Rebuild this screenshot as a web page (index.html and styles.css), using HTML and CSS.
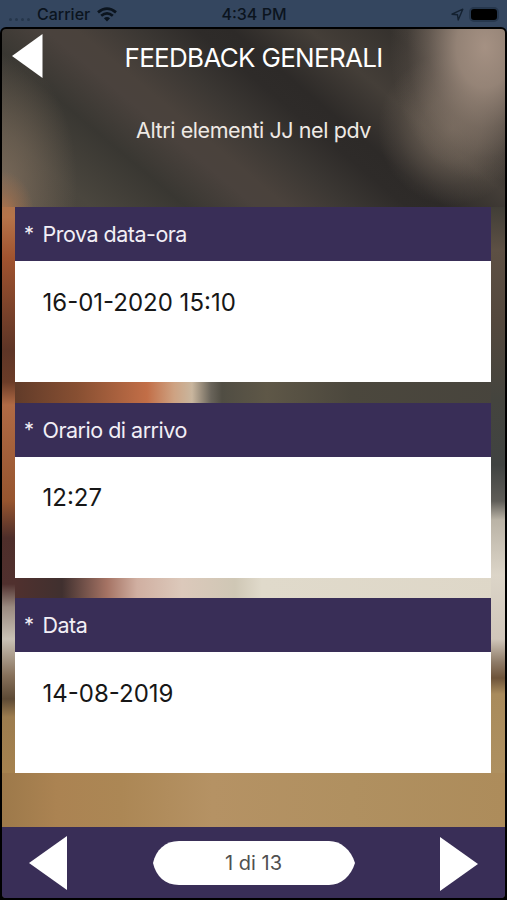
FILE: index.html
```html
<!DOCTYPE html>
<html lang="it">
<head>
<meta charset="utf-8">
<title>Feedback generali</title>
<link rel="stylesheet" href="styles.css">
</head>
<body>
<div class="phone">
  <div class="status">
    <div class="carrier">
      <span class="dots"><i></i><i></i><i></i><i></i></span>
      <span class="carrier-name">Carrier</span>
      <svg class="wifi" width="20" height="15" viewBox="0 0 20 15"><g fill="none" stroke="#0b141e" stroke-width="2.7"><path d="M1 5.4Q10-2.2 19 5.4"/><path d="M4.2 8.8Q10 3.8 15.8 8.8"/></g><path d="M10 14.5 6.9 11.3Q10 8.7 13.1 11.3Z" fill="#0b141e"/></svg>
    </div>
    <span class="clock">4:34 PM</span>
    <div class="power">
      <svg width="13" height="13" viewBox="0 0 13 13"><path d="M1 6.2 11.8 1.2 7.2 12 6.5 6.8Z" fill="none" stroke="#142130" stroke-width="1.4" stroke-linejoin="round"/></svg>
      <span class="battery"></span>
    </div>
  </div>
  <div class="screen">
    <header class="header">
      <svg class="back" width="31" height="44" viewBox="0 0 31 44"><path d="M0 22 30.5 0V44Z" fill="#fff"/></svg>
      <h1 class="title">FEEDBACK GENERALI</h1>
    </header>
    <p class="subtitle">Altri elementi JJ nel pdv</p>
    <main class="cards">
      <section class="card"><h2 class="label"><span class="star">*</span><span>Prova data-ora</span></h2><div class="value">16-01-2020 15:10</div></section>
      <section class="card"><h2 class="label"><span class="star">*</span><span>Orario di arrivo</span></h2><div class="value">12:27</div></section>
      <section class="card"><h2 class="label"><span class="star">*</span><span>Data</span></h2><div class="value">14-08-2019</div></section>
    </main>
    <footer class="footer">
      <svg width="38" height="54" viewBox="0 0 38 54"><path d="M0 27 38 0V54Z" fill="#fff"/></svg>
      <div class="pager"><svg width="202" height="44" viewBox="0 0 202 44"><path d="M26 0H176C188 0 198 9 202 22C198 35 188 44 176 44H26C12 44 3 35 0 22C3 9 12 0 26 0Z" fill="#fff"/></svg><span>1 di 13</span></div>
      <svg class="next" width="38" height="54" viewBox="0 0 38 54"><path d="M0 0 38 27 0 54Z" fill="#fff"/></svg>
    </footer>
  </div>
</div>
</body>
</html>
```
FILE: styles.css
```css
* { box-sizing: border-box; }
body { margin: 0; background: #000; font-family: Inter, "Liberation Sans", sans-serif; }
.phone { width: 507px; height: 900px; display: flex; flex-direction: column; overflow: hidden; background: linear-gradient(#34465f 0 40px, #000 40px); }
.status { height: 27px; padding: 0 8px 0 9px; display: grid; grid-template-columns: 1fr auto 1fr; align-items: center; background: #34465f; color: #0b141e; font-size: 16px; font-weight: 500; line-height: 28px; }
.carrier, .power { display: flex; align-items: center; }
.power { justify-content: flex-end; gap: 5px; }
.dots { display: flex; gap: 3px; width: 28px; padding-top: 10px; }
.dots i { width: 3px; height: 3px; border-radius: 50%; background: #26364b; }
.carrier-name { width: 60px; }
.battery { width: 30px; height: 15px; border: 2px solid #26374d; border-radius: 5px; background: #000; }
.screen {
  flex: 1; display: flex; flex-direction: column; border: 2px solid #000; border-radius: 6px; overflow: hidden;
  background:
    linear-gradient(#b0744c 0, #b5744a 10px, #a0532f 51px, #5e3526 143px, #6b3c28 175px, #b06a45 198px, #96552f 294px, #4e2e2a 331px, #50302e 377px, #9a8a80 400px, #c9c1b5 432px, #86705a 469px, #5d4a35 492px, #9c7c4e 510px, #a5824f 566px) 0 178px / 13px 566px no-repeat,
    linear-gradient(#413e37 0, #5d5044 43px, #54483d 113px, #44443e 193px, #404341 258px, #5f5d58 294px, #bab3a6 313px, #dcd5c8 368px, #d0c6ba 432px, #8f7c68 455px, #6e543a 471px, #a98b5c 487px, #ae9060 566px) 100% 178px / 14px 566px no-repeat,
    linear-gradient(90deg, #613b29 13px, #874f32 75px, #c26e47 145px, #cea282 172px, #c9b69e 190px, #69645a 209px, #504d43 220px, #5e5747 265px, #4b473d 350px, #47443d) 0 353px / 100% 22px no-repeat,
    linear-gradient(90deg, #50302e 13px, #40302f 60px, #a57364 105px, #d0afa1 135px, #dcc9bb 180px, #cfc7b5 233px, #e0dacb 260px, #ded7c8) 0 547px / 100% 23px no-repeat,
    linear-gradient(90deg, #9d794a, #ab8352 55px, #ac8755 120px, #b59264 210px, #b09060 350px, #ad8c5b) 0 743px / 100% 60px no-repeat,
    radial-gradient(ellipse 32px 42px at 0 184px, #b0744c, #b0744c66 50%, #b0744c00),
    radial-gradient(ellipse 95px 135px at 483px 18px, #a59183, #a08d7fe0 30%, #92817477 60%, #92817422 82%, #92817400),
    radial-gradient(ellipse 74px 76px at 450px 100px, #75685ccc, #75685c90 40%, #75685c30 75%, #75685c00),
    radial-gradient(ellipse 75px 130px at 0 155px, #82705ecc, #82705e66 50%, #82705e00),
    linear-gradient(40deg, #504a41 0, #4a463e 60px, #393732 120px, #4a423d 165px, #4a423c 185px, #3b3733 225px, #2e2b29 262px, #2d2a28 285px, #443e38 335px, #36322e 385px, #3c3833 470px) 0 0 / 100% 180px no-repeat,
    #4d483f;
}
.header { height: 60px; display: grid; grid-template-columns: 101px 1fr 111px; align-items: center; padding-left: 10px; }
.back { margin-top: -6px; }
.title { margin: -2px -10px 0; color: #fff; font-size: 26px; font-weight: 375; line-height: 32px; text-align: center; letter-spacing: -0.7px; white-space: nowrap; }
.subtitle { margin: 26px 0 0; height: 30px; color: #eee9e4; font-size: 21.5px; line-height: 30px; text-align: center; letter-spacing: -0.42px; }
.cards { margin: 62px 14px 0 13px; display: flex; flex-direction: column; gap: 20.5px; }
.card { height: 175px; background: #fff; }
.label { margin: 0; height: 54px; padding-left: 9px; display: flex; align-items: center; background: #392e57; color: #f2eff6; font-size: 21.5px; font-weight: 400; letter-spacing: -0.5px; }
.star { width: 18.5px; font-size: 20px; }
.value { padding: 25.5px 27.5px; color: #171717; font-size: 24px; line-height: 31px; }
.footer { margin-top: auto; height: 71px; flex-shrink: 0; display: flex; justify-content: space-between; align-items: center; padding: 1px 27px 0; background: #392e57; }
.next { margin-top: 1px; }
.pager { display: grid; place-items: center; color: #505050; font-size: 20px; }
.pager > * { grid-area: 1 / 1; }
```
